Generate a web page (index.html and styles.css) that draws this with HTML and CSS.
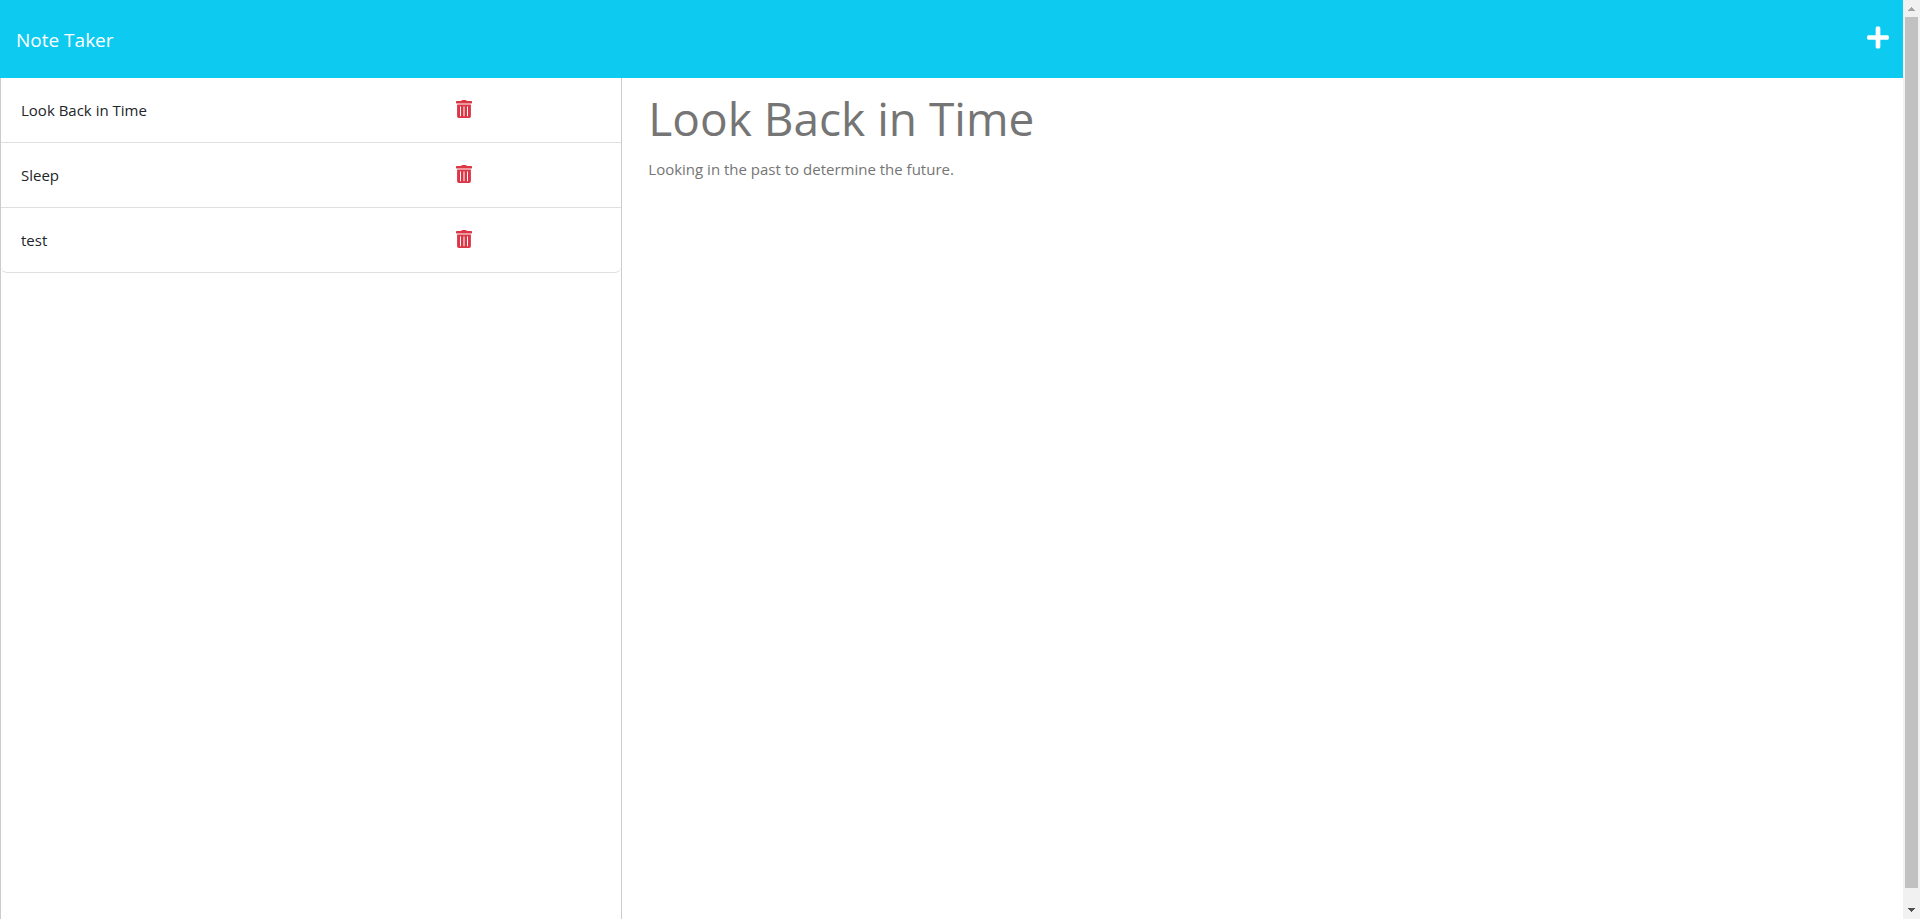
FILE: index.html
```html
<!DOCTYPE html>
<html lang="en">
<head>
<meta charset="utf-8">
<title>Note Taker</title>
<link rel="stylesheet" href="styles.css">
</head>
<body>
<div class="window">
  <div class="page">
    <header class="navbar">
      <a class="brand" href="#">Note Taker</a>
      <button class="icon-button new-note" type="button" aria-label="New note">
        <svg viewBox="0 0 448 512" width="22" height="25" aria-hidden="true"><path fill="currentColor" d="M416 208H272V64c0-17.700-14.300-32-32-32h-32c-17.700 0-32 14.300-32 32v144H32c-17.700 0-32 14.300-32 32v32c0 17.700 14.300 32 32 32h144v144c0 17.700 14.300 32 32 32h32c17.700 0 32-14.300 32-32V304h144c17.700 0 32-14.300 32-32v-32c0-17.700-14.300-32-32-32z"/></svg>
      </button>
    </header>
    <main class="content">
      <nav class="sidebar" aria-label="Saved notes">
        <ul class="note-list">
          <li class="note"><a class="note-title" href="#">Look Back in Time</a><button class="icon-button delete" type="button" aria-label="Delete Look Back in Time"><svg viewBox="0 0 16 18" width="16" height="18" aria-hidden="true"><use href="#trash"/></svg></button></li>
          <li class="note"><a class="note-title" href="#">Sleep</a><button class="icon-button delete" type="button" aria-label="Delete Sleep"><svg viewBox="0 0 16 18" width="16" height="18" aria-hidden="true"><use href="#trash"/></svg></button></li>
          <li class="note"><a class="note-title" href="#">test</a><button class="icon-button delete" type="button" aria-label="Delete test"><svg viewBox="0 0 16 18" width="16" height="18" aria-hidden="true"><use href="#trash"/></svg></button></li>
        </ul>
      </nav>
      <section class="editor">
        <input class="title-field" type="text" aria-label="Note title" value="Look Back in Time" readonly>
        <textarea class="text-field" aria-label="Note text" readonly>Looking in the past to determine the future.</textarea>
      </section>
    </main>
  </div>
  <div class="scrollbar" aria-hidden="true">
    <svg class="arrow-up" viewBox="0 0 17 17" width="17" height="17"><path fill="currentColor" d="M8 7h1v1h1v1h1v1h1v1H5v-1h1V9h1V8h1z"/></svg>
    <div class="thumb"></div>
    <svg class="arrow-down" viewBox="0 0 17 17" width="17" height="17"><path fill="currentColor" d="M5 6h7v1h-1v1h-1v1H9v1H8V9H7V8H6V7H5z"/></svg>
  </div>
</div>
<svg class="symbols" width="0" height="0" aria-hidden="true">
  <symbol id="trash" viewBox="0 0 16 18">
    <path fill="currentColor" fill-rule="evenodd" d="M.6 1.100H5L5.600.4Q5.900 0 6.400 0h3.200q.5 0 .8.4l.6.7h4.400q.6 0 .6.600v1.100q0 .6-.6.600H.6Q0 3.400 0 2.800V1.700q0-.6.600-.6zM1.100 4.500h13.800v11.800q0 1.700-1.700 1.700H2.800q-1.700 0-1.700-1.700zM4 6.700v9q0 .5.500.5t.5-.5v-9q0-.5-.5-.5t-.5.5zm3.500 0v9q0 .5.500.5t.5-.5v-9q0-.5-.5-.5t-.5.5zm3.500 0v9q0 .5.500.5t.5-.5v-9q0-.5-.5-.5t-.5.5z"/>
  </symbol>
</svg>
</body>
</html>
```
FILE: styles.css
```css
* {
  box-sizing: border-box;
}

body {
  margin: 0;
  background: #fff;
  color: #212529;
  font-family: "Open Sans", "Noto Sans", sans-serif;
  font-size: 15px;
  line-height: 24px;
}

.window {
  display: flex;
  height: 100vh;
}

.page {
  display: flex;
  flex: 1;
  flex-direction: column;
  min-width: 0;
}

.navbar {
  display: flex;
  align-items: center;
  justify-content: space-between;
  min-height: 78px;
  padding: 0 14px 0 16px;
  background: #0dcaf0;
  color: #fff;
}

.brand {
  padding-top: 2px;
  color: inherit;
  font-size: 19px;
  line-height: 30px;
  text-decoration: none;
}

.icon-button {
  display: flex;
  padding: 0;
  border: 0;
  background: none;
  color: inherit;
  cursor: pointer;
}

.new-note {
  padding-bottom: 3px;
}

.content {
  display: flex;
  flex: 1;
  min-height: 0;
}

.sidebar {
  flex: 0 0 calc(100% / 3 - 12px);
  border: solid #ccc;
  border-width: 0 1px;
}

.note-list {
  margin: 0;
  padding: 0;
  border-bottom: 1px solid #dfdfdf;
  border-radius: 0 0 6px 6px;
  list-style: none;
}

.note {
  display: grid;
  grid-template-columns: 3fr 1fr;
  align-items: center;
  min-height: 65px;
  padding: 0 20px;
}

.note:last-child {
  min-height: 64px;
}

.note:not(:last-child) {
  border-bottom: 1px solid #dfdfdf;
}

.note-title {
  color: inherit;
  text-decoration: none;
}

.delete {
  justify-self: start;
  padding-bottom: 2px;
  color: #dc3545;
}

.editor {
  display: flex;
  flex: 1;
  flex-direction: column;
  min-width: 0;
  padding: 4px 24px 0 26px;
}

.title-field,
.text-field {
  width: 100%;
  padding: 0;
  border: 0;
  outline: 0;
  background: none;
  color: #757575;
  font: inherit;
}

.title-field {
  height: 72px;
  font-size: 46px;
}

.text-field {
  flex: 1;
  padding-top: 3px;
  resize: none;
}

.scrollbar {
  display: flex;
  flex: 0 0 17px;
  flex-direction: column;
  background: #f1f1f1;
}

.arrow-up {
  color: #a3a3a3;
}

.arrow-down {
  color: #505050;
}

.thumb {
  flex: 1;
  margin: 0 2px 14px;
  background: #c1c1c1;
}

.symbols {
  position: absolute;
}
```
